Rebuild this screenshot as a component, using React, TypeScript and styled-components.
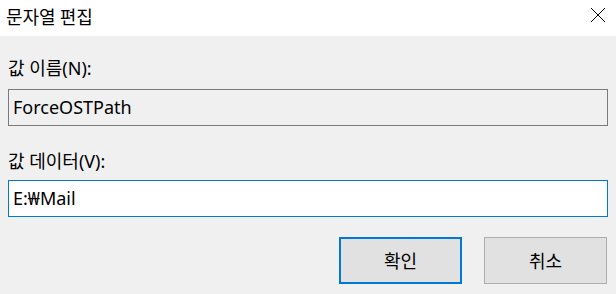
import React from "react";
import styled, { createGlobalStyle } from "styled-components";

const Global = createGlobalStyle`
  html, body { margin: 0; padding: 0; background: #f0f0f0; }
  body { width: 616px; height: 294px; overflow: hidden; }
  * { box-sizing: border-box; }
`;

const FONT = `"Noto Sans", "Noto Sans CJK KR", sans-serif`;

const Dialog = styled.div`
  width: 616px;
  height: 294px;
  display: flex;
  flex-direction: column;
  font-family: ${FONT};
  color: #000;
`;

const TitleBar = styled.div`
  height: 36px;
  background: #fff;
  display: flex;
  align-items: center;
  justify-content: space-between;
  padding: 0 10px 4px 6px;
`;

const Title = styled.div`
  font-family: "Noto Sans CJK KR", sans-serif;
  font-size: 18px;
  line-height: 24px;
`;

const CloseButton = styled.div`
  width: 16px;
  height: 16px;
  display: flex;
  align-items: center;
  justify-content: center;
  margin-top: -2px;
`;

const Body = styled.div`
  flex: 1;
  background: #f0f0f0;
  display: flex;
  flex-direction: column;
  padding: 20px 8px 0 8px;
`;

const Label = styled.div<{ $top?: number }>`
  font-size: 18px;
  line-height: 24px;
  margin-top: ${(p) => p.$top ?? 0}px;
  font-family: ${FONT};
`;

const Field = styled.div<{ $active?: boolean; $top: number }>`
  margin-top: ${(p) => p.$top}px;
  height: 37px;
  border: 1px solid ${(p) => (p.$active ? "#0078d7" : "#7a7a7a")};
  background: ${(p) => (p.$active ? "#fff" : "#f0f0f0")};
  display: flex;
  align-items: center;
  padding: 0 0 1px 4px;
  font-size: 18px;
  font-family: ${FONT};
`;

const ButtonRow = styled.div`
  display: flex;
  justify-content: flex-end;
  gap: 22px;
  margin-top: 20px;
  padding-right: 1px;
`;

const Button = styled.div<{ $primary?: boolean }>`
  width: 123px;
  height: 47px;
  background: #e1e1e1;
  border: ${(p) => (p.$primary ? "2px solid #0078d7" : "1px solid #adadad")};
  display: flex;
  align-items: center;
  justify-content: center;
  font-family: "Noto Sans CJK KR", sans-serif;
  font-size: 18px;
  padding-bottom: 2px;
`;

export default function App() {
  return (
    <>
      <Global />
      <Dialog>
        <TitleBar>
          <Title>문자열 편집</Title>
          <CloseButton>
            <svg width="16" height="16" viewBox="0 0 16 16">
              <path d="M1 1 L15 15 M15 1 L1 15" stroke="#000" strokeWidth="1" fill="none" />
            </svg>
          </CloseButton>
        </TitleBar>
        <Body>
          <Label>값 이름(N):</Label>
          <Field $top={9}>ForceOSTPath</Field>
          <Label $top={23}>값 데이터(V):</Label>
          <Field $top={7} $active>E:₩Mail</Field>
          <ButtonRow>
            <Button $primary>확인</Button>
            <Button>취소</Button>
          </ButtonRow>
        </Body>
      </Dialog>
    </>
  );
}
